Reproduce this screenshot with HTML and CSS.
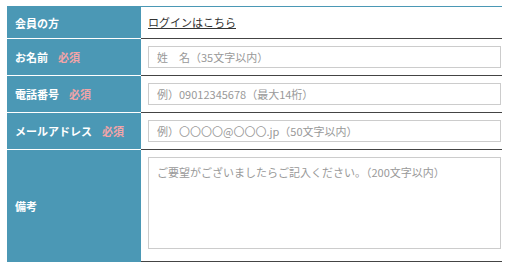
FILE: index.html
```html
<!DOCTYPE html>
<html lang="ja">
<head>
  <meta charset="UTF-8" />
  <meta name="viewport" content="width=device-width, initial-scale=1.0"/>
  <title>お問い合わせフォーム</title>
  <link rel="stylesheet" href="styles.css">
</head>
<body>
  <table class="form-table">
    <tbody>
      <tr>
        <th>会員の方</th>
        <td class="login-cell"><a href="#" class="login-link">ログインはこちら</a></td>
      </tr>
      <tr>
        <th>お名前<span class="required">必須</span></th>
        <td><input type="text" class="field" placeholder="姓　名（35文字以内）"></td>
      </tr>
      <tr>
        <th>電話番号<span class="required">必須</span></th>
        <td><input type="text" class="field" placeholder="例）09012345678（最大14桁）"></td>
      </tr>
      <tr>
        <th>メールアドレス<span class="required">必須</span></th>
        <td><input type="text" class="field" placeholder="例）〇〇〇〇@〇〇〇.jp（50文字以内）"></td>
      </tr>
      <tr>
        <th>備考</th>
        <td class="memo-cell"><textarea class="memo" placeholder="ご要望がございましたらご記入ください。（200文字以内）"></textarea></td>
      </tr>
    </tbody>
  </table>
</body>
</html>
```

FILE: styles.css
```css
body {
  font-family: "Noto Sans CJK JP", "Noto Sans", sans-serif;
  background-color: white;
  margin: 0;
  padding: 6px 19px 0 7px;
  color: #333;
}

.form-table {
  width: 495px;
  border-collapse: separate;
  border-spacing: 0;
  border-top: 1px solid #4b98b5;
}

.form-table th {
  width: 134px;
  box-sizing: border-box;
  background-color: #4b98b5;
  color: white;
  font-size: 11px;
  font-weight: bold;
  text-align: left;
  padding: 0 8px;
  border-bottom: 1px solid white;
  white-space: nowrap;
}

.form-table tr:last-child th {
  border-bottom: none;
}

.form-table td {
  padding: 7px 1px 7px 7px;
  border-bottom: 1px solid #444;
}

.form-table tr:last-child td {
  padding-bottom: 12px;
}

.required {
  color: #f2a4a8;
  margin-left: 10px;
}

.login-cell {
  font-size: 11px;
  line-height: 17px;
}

.login-link {
  color: #333;
  text-decoration: underline;
}

.field,
.memo {
  display: block;
  box-sizing: border-box;
  width: 353px;
  margin: 0;
  border: 1px solid #ccc;
  border-radius: 0;
  background: white;
  font-family: inherit;
  font-size: 11px;
  color: #333;
  padding: 0 8px;
  outline: none;
}

.field {
  height: 22px;
}

.memo {
  height: 92px;
  padding-top: 6px;
  resize: none;
}

.field::placeholder,
.memo::placeholder {
  color: #999;
}
```
